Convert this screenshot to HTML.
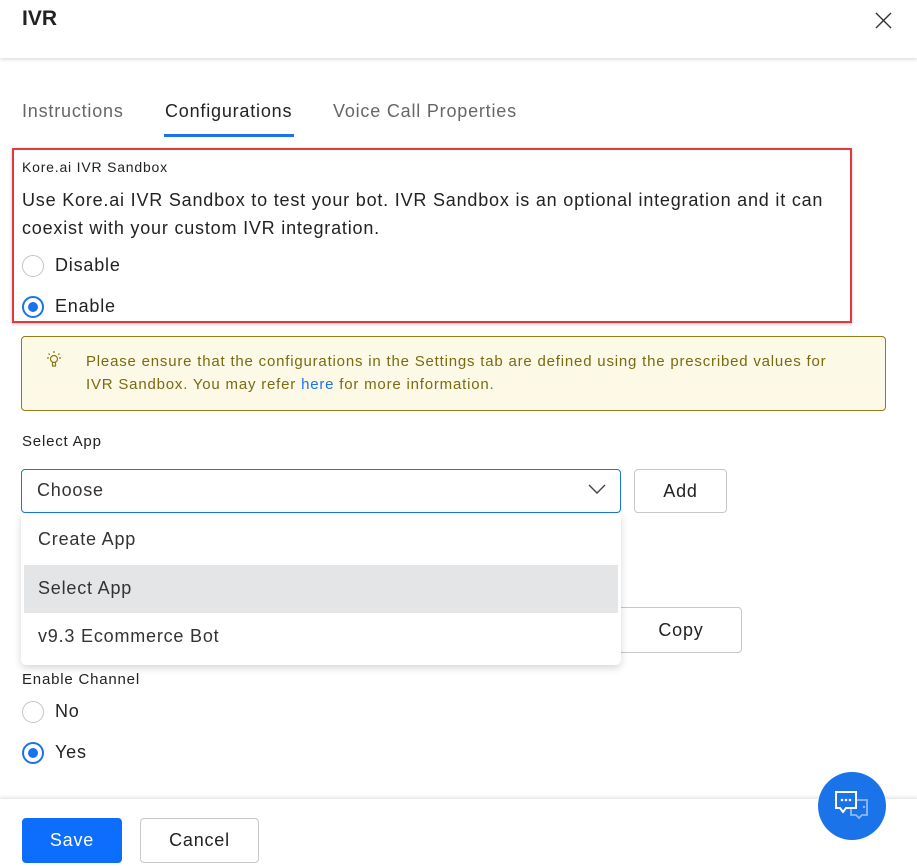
<!DOCTYPE html>
<html><head><meta charset="utf-8"><style>
*{box-sizing:border-box;margin:0;padding:0}
body{width:917px;height:866px;position:relative;background:#fff;font-family:"Liberation Sans",sans-serif;color:#222;overflow:hidden;letter-spacing:0.05em}
.a{position:absolute;white-space:nowrap}
.radio{position:absolute;width:22px;height:22px;border-radius:50%;border:1.5px solid #c4c4c4;background:#fff}
.radio.on{border:2px solid #1a73e8}
.radio.on::after{content:"";position:absolute;left:4px;top:4px;width:10px;height:10px;border-radius:50%;background:#1a73e8}
.btn{position:absolute;border:1px solid #c8c8c8;border-radius:4px;background:#fff;font-size:18px;display:flex;align-items:center;justify-content:center;color:#222}
</style></head><body>
<div class="a" style="left:0;top:0;width:917px;height:58px;box-shadow:0 2px 3px rgba(0,0,0,0.12)"></div>
<div class="a" style="left:22px;top:7px;font-size:21px;font-weight:bold;color:#222;letter-spacing:0">IVR</div>
<svg class="a" style="left:875px;top:12px" width="17" height="17"><path d="M1 1L16 16M16 1L1 16" stroke="#333" stroke-width="1.4"/></svg>

<div class="a" style="left:22px;top:101px;font-size:18px;color:#666">Instructions</div>
<div class="a" style="left:165px;top:101px;font-size:18px;color:#222">Configurations</div>
<div class="a" style="left:333px;top:101px;font-size:18px;color:#666">Voice Call Properties</div>
<div class="a" style="left:164px;top:134px;width:130px;height:3px;background:#1a73e8"></div>

<div class="a" style="left:12px;top:148px;width:840px;height:175px;border:2px solid #e0393e;box-shadow:0 1px 3px rgba(0,0,0,0.25)"></div>
<div class="a" style="left:22px;top:159px;font-size:14px;color:#222">Kore.ai IVR Sandbox</div>
<div class="a" style="left:22px;top:186px;font-size:18px;line-height:28px;color:#222">Use Kore.ai IVR Sandbox to test your bot. IVR Sandbox is an optional integration and it can<br>coexist with your custom IVR integration.</div>
<div class="radio" style="left:22px;top:255px"></div>
<div class="a" style="left:55px;top:255px;font-size:18px">Disable</div>
<div class="radio on" style="left:22px;top:296px"></div>
<div class="a" style="left:55px;top:296px;font-size:18px">Enable</div>

<div class="a" style="left:21px;top:336px;width:865px;height:75px;background:#fdf9e7;border:1px solid #8f7d17;border-radius:4px"></div>
<svg class="a" style="left:44px;top:350px" width="20" height="22" viewBox="0 0 20 22"><circle cx="10" cy="9" r="3.5" fill="none" stroke="#8a7a16" stroke-width="1.2"/><path d="M8.5 12.5v3.5h3v-3.5M10 1v2M3 8h2M15 8h2M4.5 3.5l1.3 1.3M15.5 3.5l-1.3 1.3" stroke="#8a7a16" stroke-width="1.2" fill="none"/></svg>
<div class="a" style="left:86px;top:350px;font-size:15px;line-height:23px;color:#7a6a12">Please ensure that the configurations in the Settings tab are defined using the prescribed values for<br>IVR Sandbox. You may refer <span style="color:#1a73e8">here</span> for more information.</div>

<div class="a" style="left:22px;top:433px;font-size:15px">Select App</div>
<div class="a" style="left:21px;top:469px;width:600px;height:44px;border:1px solid #1a73e8;border-radius:4px"></div>
<div class="a" style="left:37px;top:480px;font-size:18px;color:#333">Choose</div>
<svg class="a" style="left:587px;top:483px" width="20" height="12"><path d="M2 2L10 10L18 2" stroke="#444" stroke-width="1.4" fill="none"/></svg>
<div class="btn" style="left:634px;top:469px;width:93px;height:44px">Add</div>

<div class="btn" style="left:600px;top:607px;width:142px;height:46px;padding-left:20px">Copy</div>

<div class="a" style="left:21px;top:513px;width:600px;height:152px;background:#fff;border-radius:0 0 5px 5px;box-shadow:0 3px 8px rgba(0,0,0,0.16)"></div>
<div class="a" style="left:38px;top:529px;font-size:18px;color:#333">Create App</div>
<div class="a" style="left:24px;top:565px;width:594px;height:48px;background:#e4e5e7"></div>
<div class="a" style="left:38px;top:578px;font-size:18px;color:#333">Select App</div>
<div class="a" style="left:38px;top:626px;font-size:18px;color:#333">v9.3 Ecommerce Bot</div>

<div class="a" style="left:22px;top:671px;font-size:15px">Enable Channel</div>
<div class="radio" style="left:22px;top:701px"></div>
<div class="a" style="left:55px;top:701px;font-size:18px">No</div>
<div class="radio on" style="left:22px;top:742px"></div>
<div class="a" style="left:55px;top:742px;font-size:18px">Yes</div>

<div class="a" style="left:0;top:799px;width:917px;height:67px;background:#fff;box-shadow:0 -2px 3px rgba(0,0,0,0.1)"></div>
<div class="btn" style="left:22px;top:818px;width:100px;height:45px;background:#0d6efd;border-color:#0d6efd;color:#fff">Save</div>
<div class="btn" style="left:140px;top:818px;width:119px;height:45px">Cancel</div>

<div class="a" style="left:818px;top:772px;width:68px;height:68px;border-radius:50%;background:#1a73e8"></div>
<svg class="a" style="left:832px;top:788px" width="40" height="36" viewBox="0 0 40 36"><path d="M19 12h16v15h-5l-3 3-3-3h-5z" fill="none" stroke="#8fb8f5" stroke-width="1.8"/><circle cx="32" cy="19" r="1.2" fill="#8fb8f5"/><path d="M4 4h20v16h-10l-3 4-3-4h-4z" fill="#1a73e8" stroke="#fff" stroke-width="2"/><circle cx="10" cy="12" r="1.3" fill="#fff"/><circle cx="14" cy="12" r="1.3" fill="#fff"/><circle cx="18" cy="12" r="1.3" fill="#fff"/></svg>
</body></html>
